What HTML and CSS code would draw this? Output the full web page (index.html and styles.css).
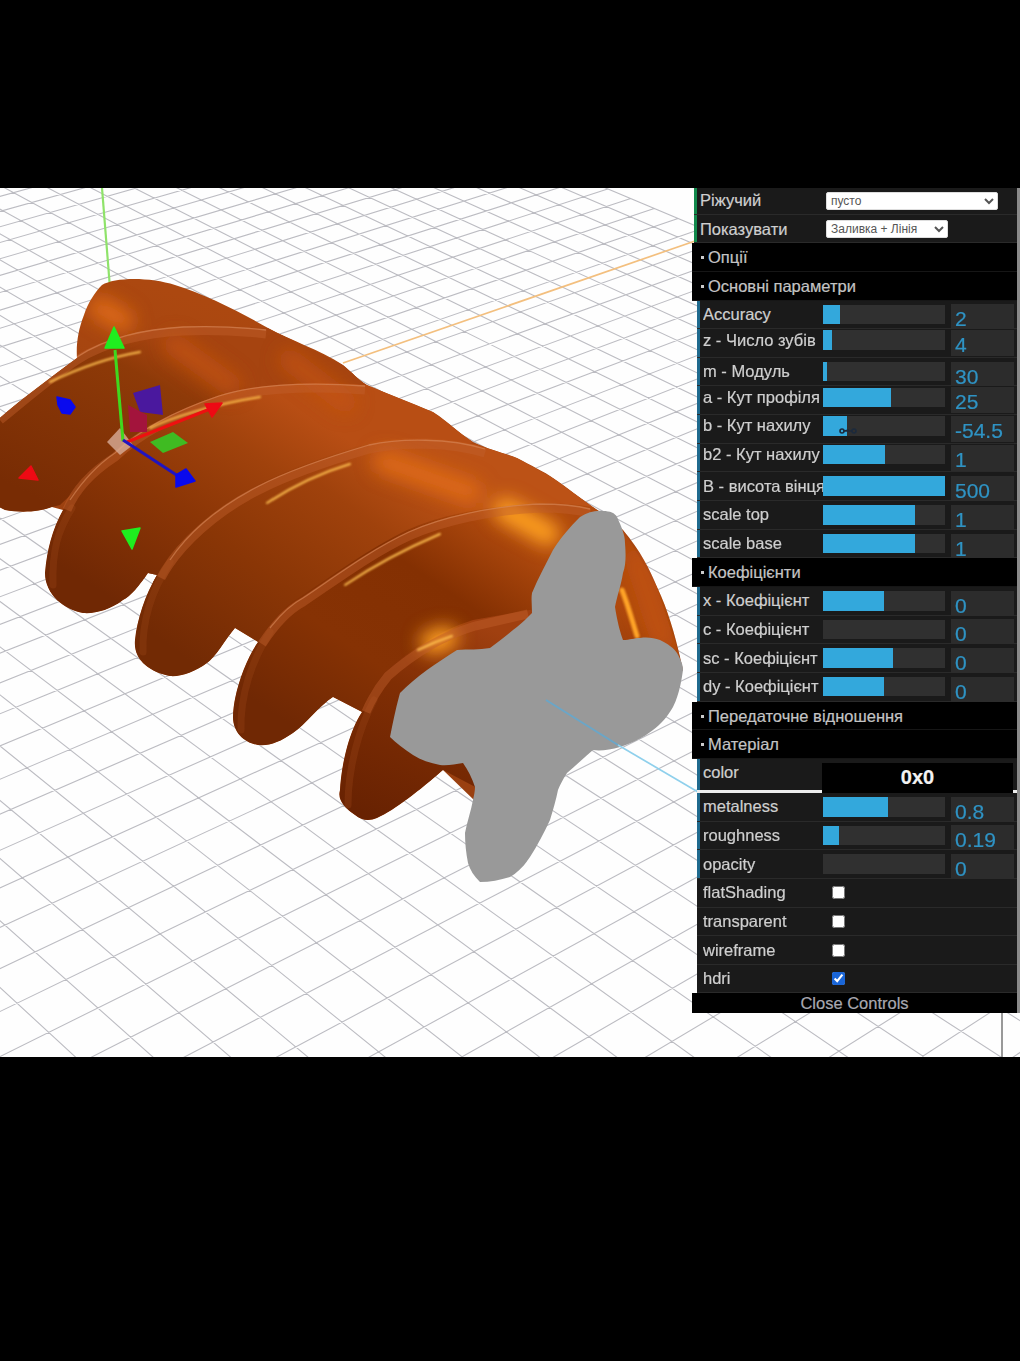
FILE: index.html
```html
<!DOCTYPE html>
<html lang="uk">
<head>
<meta charset="utf-8">
<title>Gear</title>
<link rel="stylesheet" href="styles.css">
</head>
<body>
<div class="band-top"></div>
<main class="stage">
  <svg class="scene" viewBox="0 188 1020 869" aria-hidden="true">
    <defs>
      <clipPath id="silhouette"><path d="M-5,422 C20,400 50,378 77,358 C76,345 78,330 84,315 C88,303 95,292 102,285 C115,277 150,277 175,285 C205,294 240,312 268,328 C290,340 320,350 343,365 C352,372 358,380 367,385 C390,395 410,402 433,412 C450,423 460,434 473,442 C490,450 505,453 517,458 C530,465 545,472 553,478 C568,488 580,498 593,507 C605,515 615,522 623,530 C640,550 650,570 657,587 C668,610 675,635 680,657 L683,670 L640,720 L560,770 L476,802 L443,770 C420,790 395,810 377,818 C370,821 362,821 355,815 C345,808 337,800 340,790 C342,760 350,730 362,712 L333,697 C320,705 305,725 293,733 C280,742 270,746 258,745 C245,743 233,733 233,717 C233,695 245,660 258,642 L235,628 C225,640 215,658 207,663 C195,672 180,677 170,676 C150,672 133,660 135,640 C137,620 145,595 157,575 L148,573 C140,585 130,597 123,600 C110,610 95,614 83,613 C65,610 45,595 45,573 C47,550 52,530 63,510 L52,507 C40,512 20,513 5,510 L-5,505 Z"/></clipPath>
      <linearGradient id="gBase" gradientUnits="userSpaceOnUse" x1="200" y1="300" x2="120" y2="560"><stop offset="0" stop-color="#ac4810"/><stop offset="1" stop-color="#9a4010"/></linearGradient>
      <linearGradient id="gT1" gradientUnits="userSpaceOnUse" x1="150" y1="335" x2="60" y2="510"><stop offset="0" stop-color="#a64410"/><stop offset=".2" stop-color="#8e3a08"/><stop offset="1" stop-color="#782c04"/></linearGradient>
      <linearGradient id="gT2" gradientUnits="userSpaceOnUse" x1="270" y1="390" x2="130" y2="610"><stop offset="0" stop-color="#b84e14"/><stop offset=".25" stop-color="#a0420c"/><stop offset=".55" stop-color="#8c3606"/><stop offset="1" stop-color="#702804"/></linearGradient>
      <linearGradient id="gT3" gradientUnits="userSpaceOnUse" x1="390" y1="445" x2="215" y2="680"><stop offset="0" stop-color="#bc5216"/><stop offset=".25" stop-color="#a0420c"/><stop offset=".6" stop-color="#8a3606"/><stop offset="1" stop-color="#722a04"/></linearGradient>
      <linearGradient id="gT4" gradientUnits="userSpaceOnUse" x1="480" y1="510" x2="320" y2="745"><stop offset="0" stop-color="#b04a0e"/><stop offset=".3" stop-color="#843002"/><stop offset=".65" stop-color="#863204"/><stop offset="1" stop-color="#702804"/></linearGradient>
      <linearGradient id="gT5" gradientUnits="userSpaceOnUse" x1="470" y1="620" x2="380" y2="820"><stop offset="0" stop-color="#a04010"/><stop offset=".4" stop-color="#802e04"/><stop offset="1" stop-color="#682202"/></linearGradient>
      <filter id="soft" x="-60%" y="-60%" width="220%" height="220%"><feGaussianBlur stdDeviation="9"/></filter>
      <filter id="softer" x="-40%" y="-40%" width="180%" height="180%"><feGaussianBlur stdDeviation=".9"/></filter>
    </defs>

    <rect class="floor" x="0" y="188" width="1020" height="869"/>
    <path id="grid" class="grid"/>
    <line class="axis-green" x1="102" y1="188" x2="110" y2="288"/>
    <line class="axis-orange" x1="343" y1="363" x2="695" y2="241"/>

    <g clip-path="url(#silhouette)">
      <rect class="gear-base" x="-5" y="270" width="700" height="560"/>
      <path class="t1" d="M-5,422 C20,400 50,378 77,358 C105,340 145,330 183,327 C210,326 240,327 268,328 L343,365 L367,385 L113,455 L60,505 L52,507 C40,512 20,513 5,510 L-5,505 Z"/>
      <path class="t2" d="M63,510 C72,490 90,470 113,455 C135,432 170,412 217,396 C250,386 300,380 367,385 L433,412 L473,442 L157,590 L148,573 C140,585 130,597 123,600 C110,610 95,614 83,613 C65,610 45,595 45,573 C47,550 52,530 63,510 Z"/>
      <path class="t3" d="M157,575 C175,540 215,505 257,485 C290,468 330,455 367,443 C400,436 450,436 487,448 L517,458 L553,478 L593,507 L340,600 L258,642 L235,628 C225,640 215,658 207,663 C195,672 180,677 170,676 C150,672 133,660 135,640 C137,620 145,595 157,575 Z"/>
      <path class="t4" d="M258,642 C272,620 285,605 300,597 C330,577 370,548 407,530 C440,515 490,505 540,503 C560,503 580,505 593,507 L623,530 L657,587 L680,657 L600,700 L450,640 L362,712 L333,697 C320,705 305,725 293,733 C280,742 270,746 258,745 C245,743 233,733 233,717 C233,695 245,660 258,642 Z"/>
      <path class="t5" d="M362,712 C368,695 375,685 385,672 C410,650 440,630 473,620 L530,610 L680,660 L500,800 L443,770 C420,790 395,810 377,818 C370,821 362,821 355,815 C345,808 337,800 340,790 C342,760 350,730 362,712 Z"/>

      <g class="sheen" filter="url(#soft)">
        <path class="sheen-a" d="M100,308 L122,320"/>
        <path class="sheen-b" d="M175,345 L230,385"/>
        <path class="sheen-b" d="M290,360 L345,402"/>
        <path class="sheen-a" d="M385,462 L470,492"/>
        <path class="sheen-c" d="M505,510 L548,534"/>
        <path class="sheen-c" d="M432,642 L446,638"/>
        <path class="sheen-b" d="M636,560 L662,640"/>
      </g>

      <g class="lobe-edges">
        <path d="M53,585 C52,550 58,530 72,508"/>
        <path d="M143,652 C142,620 152,590 170,562"/>
        <path d="M241,730 C240,695 252,660 270,632"/>
        <path d="M348,805 C348,770 358,730 374,700"/>
      </g>
      <g class="ridges">
        <path d="M0,420 C25,400 50,378 77,360 C105,342 145,333 183,331 C210,330 240,331 266,334"/>
        <path d="M67,510 C75,490 92,472 115,457 C137,436 172,416 219,400 C250,390 300,385 365,390"/>
        <path d="M161,578 C178,545 218,510 259,490 C292,473 332,460 369,449 C400,442 450,442 485,453"/>
        <path d="M262,644 C275,624 288,610 303,602 C333,582 372,553 409,536 C442,521 492,510 540,508 C560,508 578,510 590,513"/>
        <path d="M366,712 C372,698 378,688 388,676 C412,655 442,636 475,626 L528,614"/>
      </g>
      <g class="ridge-lines">
        <path d="M0,416 C25,396 50,374 77,357 C105,338 145,329 183,327 C210,326 240,327 266,330"/>
        <path d="M70,500 C82,482 97,465 115,453 C137,432 172,412 219,396 C250,386 300,381 365,386"/>
        <path d="M170,560 C190,530 222,505 259,486 C292,469 332,456 369,445 C400,438 450,438 485,449"/>
        <path d="M270,628 C280,615 290,605 303,598 C333,578 372,549 409,532 C442,517 492,506 540,504 C560,504 578,506 590,509"/>
      </g>
      <g class="glints" filter="url(#softer)">
        <path d="M50,382 C75,370 105,358 140,352"/>
        <path d="M150,428 C170,418 215,404 260,397"/>
        <path d="M267,503 C290,488 320,473 350,464"/>
        <path d="M345,585 C370,568 405,549 440,534"/>
        <path d="M418,650 C428,645 440,640 452,636"/>
        <path class="glint-wide" d="M622,590 C628,605 632,620 637,636"/>
      </g>
    </g>

    <path class="end-face" d="M580,517 C588,512 596,510 603,511 C610,511 615,513 617,517 C622,528 625,535 625,543 C626,555 626,565 623,573 C621,586 617,596 615,607 C617,620 620,632 623,640 C630,640 634,638 640,638 C648,637 654,638 660,640 C668,644 674,648 677,653 C681,660 683,665 683,670 C681,685 678,697 673,707 C668,716 661,724 653,730 C643,738 632,743 620,747 C610,750 600,751 593,750 C585,757 575,766 567,773 C563,779 560,785 558,790 C556,800 553,810 550,820 C544,833 537,846 530,857 C524,866 517,873 510,877 C500,880 490,882 480,882 C474,876 470,870 468,863 C466,853 465,843 465,833 C467,822 471,811 473,800 C474,795 475,791 475,787 C472,778 468,770 463,763 C455,764 448,766 440,765 C430,763 421,760 413,755 C404,749 396,743 390,737 C393,722 396,707 400,693 C408,685 417,677 427,670 C437,663 447,656 457,650 C468,649 479,650 490,648 C498,642 506,636 513,630 C520,625 526,619 532,613 C532,606 531,599 532,593 C538,578 546,564 553,550 C561,537 570,527 580,517 Z"/>
    <line class="axis-blue-in" x1="546" y1="700" x2="618" y2="745"/>
    <line class="axis-blue-out" x1="618" y1="745" x2="698" y2="792"/>

    <g class="gizmo">
      <polygon class="plane-blue" points="133,393 160,385 163,415 140,412"/>
      <polygon class="plane-red" points="128,405 147,415 147,432 130,432"/>
      <polygon class="plane-green" points="150,442 173,432 188,443 163,453"/>
      <polygon class="center" points="107,442 120,428 133,445 120,455"/>
      <line class="line-red" x1="127" y1="442" x2="210" y2="409"/>
      <line class="line-green" x1="123" y1="441" x2="115" y2="350"/>
      <line class="line-blue" x1="123" y1="440" x2="178" y2="476"/>
      <polygon class="cone-green" points="114,327 124,348 105,348"/>
      <polygon class="cone-blue" points="176,475 186,469 195,481 176,487"/>
      <polygon class="cone-red" points="205,404 222,403 212,417"/>
      <polygon class="cone-blue" points="57,397 70,400 75,407 70,414 62,413 58,405"/>
      <polygon class="cone-red" points="19,478 31,466 38,480"/>
      <polygon class="cone-green" points="122,531 140,528 132,549"/>
    </g>

    <rect class="scrollbar" x="1017" y="188" width="3" height="825"/>
    <line class="edge" x1="1002" y1="1013" x2="1002" y2="1057"/>
  </svg>

  <aside class="panel">
    <div class="row row-pick"><span class="label">Ріжучий</span><select class="pick pick-wide"><option>пусто</option></select></div>
    <div class="row row-pick"><span class="label">Показувати</span><select class="pick"><option>Заливка + Лінія</option></select></div>
    <div class="title">Опції</div>
    <div class="title">Основні параметри</div>

    <div class="row"><span class="label">Accuracy</span><div class="track"><div class="fill" style="width:14%"></div></div><div class="num">2</div></div>
    <div class="row raised"><span class="label">z - Число зубів</span><div class="track"><div class="fill" style="width:7%"></div></div><div class="num">4</div></div>
    <div class="row"><span class="label">m - Модуль</span><div class="track"><div class="fill" style="width:3%"></div></div><div class="num">30</div></div>
    <div class="row raised"><span class="label">a - Кут профіля</span><div class="track"><div class="fill" style="width:56%"></div></div><div class="num">25</div></div>
    <div class="row raised"><span class="label">b - Кут нахилу</span><div class="track"><div class="fill" style="width:20%"></div></div><div class="num">-54.5</div>
      <svg class="cursor" viewBox="0 0 18 10" aria-hidden="true"><circle cx="3" cy="5" r="2"/><circle cx="15" cy="5" r="2"/><path d="M5 5 L10 4 M5 5 L13 5"/></svg>
    </div>
    <div class="row raised"><span class="label">b2 - Кут нахилу</span><div class="track"><div class="fill" style="width:51%"></div></div><div class="num">1</div></div>
    <div class="row"><span class="label">B - висота вінця</span><div class="track"><div class="fill" style="width:100%"></div></div><div class="num">500</div></div>
    <div class="row"><span class="label">scale top</span><div class="track"><div class="fill" style="width:75%"></div></div><div class="num">1</div></div>
    <div class="row"><span class="label">scale base</span><div class="track"><div class="fill" style="width:75%"></div></div><div class="num">1</div></div>

    <div class="title">Коефіцієнти</div>
    <div class="row"><span class="label">x - Коефіцієнт</span><div class="track"><div class="fill" style="width:50%"></div></div><div class="num">0</div></div>
    <div class="row"><span class="label">c - Коефіцієнт</span><div class="track"></div><div class="num">0</div></div>
    <div class="row"><span class="label">sc - Коефіцієнт</span><div class="track"><div class="fill" style="width:57%"></div></div><div class="num">0</div></div>
    <div class="row"><span class="label">dy - Коефіцієнт</span><div class="track"><div class="fill" style="width:50%"></div></div><div class="num">0</div></div>

    <div class="title">Передаточне відношення</div>
    <div class="title">Матеріал</div>

    <div class="row row-color"><span class="label">color</span><div class="swatch">0x0</div></div>
    <div class="row"><span class="label">metalness</span><div class="track"><div class="fill" style="width:53%"></div></div><div class="num">0.8</div></div>
    <div class="row"><span class="label">roughness</span><div class="track"><div class="fill" style="width:13%"></div></div><div class="num">0.19</div></div>
    <div class="row"><span class="label">opacity</span><div class="track"></div><div class="num">0</div></div>
    <div class="row row-flag"><span class="label">flatShading</span><input class="flag" type="checkbox"></div>
    <div class="row row-flag"><span class="label">transparent</span><input class="flag" type="checkbox"></div>
    <div class="row row-flag"><span class="label">wireframe</span><input class="flag" type="checkbox"></div>
    <div class="row row-flag"><span class="label">hdri</span><input class="flag" type="checkbox" checked></div>
    <div class="close">Close Controls</div>
  </aside>
</main>
<script src="grid.js"></script>
</body>
</html>
```
FILE: styles.css
```css
* { box-sizing: border-box; }
html, body { margin: 0; height: 1361px; overflow: hidden; background: #000; }
body { display: flex; flex-direction: column; font-family: "Liberation Sans", Arial, sans-serif; }
.band-top { height: 188px; flex: none; background: #000; }
.stage { position: relative; height: 869px; flex: none; overflow: hidden; background: #fdfdfd; filter: blur(.6px); }
.scene { position: absolute; left: 0; top: 0; width: 1020px; height: 869px; display: block; }

.floor { fill: #fefefe; }
.grid { fill: none; stroke: #bcbcc2; stroke-width: 1.1; }
.axis-green { stroke: #8fe36a; stroke-width: 2.2; }
.axis-orange { stroke: #f3bf7e; stroke-width: 1.8; }
.axis-blue-in { stroke: #6aa6c8; stroke-width: 2; }
.axis-blue-out { stroke: #8fd0ec; stroke-width: 1.6; }

.gear-base { fill: url(#gBase); }
.t1 { fill: url(#gT1); }
.t2 { fill: url(#gT2); }
.t3 { fill: url(#gT3); }
.t4 { fill: url(#gT4); }
.t5 { fill: url(#gT5); }
.sheen path { fill: none; stroke-linecap: round; }
.sheen-a { stroke: #e06c14; stroke-width: 24; opacity: .9; }
.sheen-b { stroke: #c65412; stroke-width: 22; opacity: .7; }
.sheen-c { stroke: #ffa024; stroke-width: 24; }
.lobe-edges path { fill: none; stroke: #a04a1c; stroke-width: 7; opacity: .3; stroke-linecap: round; }
.ridges path { fill: none; stroke: #c0602c; stroke-width: 9; opacity: .45; }
.ridge-lines path { fill: none; stroke: #d88a5c; stroke-width: 1.3; opacity: .6; }
.glints path { fill: none; stroke: #ffc050; stroke-width: 2; stroke-linecap: round; }
.glints .glint-wide { stroke: #ffa428; stroke-width: 5; }
.end-face { fill: #999; }

.plane-blue { fill: #4a189e; }
.plane-red { fill: #a3143c; }
.plane-green { fill: #3fbb22; }
.center { fill: #d8ac98; opacity: .8; }
.line-red { stroke: #ee1010; stroke-width: 3; }
.line-green { stroke: #3fd81e; stroke-width: 3; }
.line-blue { stroke: #2014c0; stroke-width: 3; }
.cone-green { fill: #1fee1f; stroke: #1fee1f; stroke-linejoin: round; stroke-width: 1.5; }
.cone-blue { fill: #0a0aee; stroke: #0a0aee; stroke-linejoin: round; stroke-width: 1.5; }
.cone-red { fill: #ee0a14; stroke: #ee0a14; stroke-linejoin: round; stroke-width: 1.5; }
.scrollbar { fill: #8a8a8a; }
.edge { stroke: #777; stroke-width: 1.5; }

.panel { position: absolute; left: 692px; top: -2px; width: 325px; color: #cfcfcf; font-size: 16.5px; -webkit-text-stroke: .2px; }
.row { position: relative; display: flex; align-items: center; height: 28.65px; margin-left: 5px; padding-left: 6px; padding-right: 3px; background: #1a1a1a; border-bottom: 1px solid #2a2a2a; box-shadow: inset 3px 0 0 #1f6a8e; }
.row.raised { padding-bottom: 6px; }
.row-pick { box-shadow: inset 3px 0 0 #128a4c; margin-left: 2px; padding: 2px 3px 0 6px; }
.row-flag { box-shadow: inset 3px 0 0 #1a1a1a; }
.label { flex: none; width: 120px; white-space: nowrap; overflow: hidden; }
.track { flex: none; width: 122px; height: 19.5px; background: #303030; margin-right: 6px; }
.fill { height: 100%; background: #33a8dc; }
.num { flex: none; width: 63px; height: 26px; padding-left: 4px; margin-top: 6px; background: #2c2c2c; color: #2f93c4; font-size: 21px; line-height: 30px; overflow: hidden; }
.pick { margin-left: 6px; width: 172px; height: 18px; padding: 0; border: 1px solid #ddd; border-radius: 2px; background: #fff; color: #555; font: 12px "Liberation Sans", Arial, sans-serif; -webkit-text-stroke: 0; }
.pick:not(.pick-wide) { width: 122px; }
.title { height: 28.65px; padding-left: 16px; position: relative; background: #000; color: #c4c4c4; line-height: 28px; border-bottom: 1px solid #161616; }
.title::before { content: ""; position: absolute; left: 9px; top: 13px; width: 3px; height: 3px; background: #ccc; }
.row-color { height: 34.2px; border-bottom: 3px solid #eee; align-items: flex-start; padding-top: 4px; }
.swatch { position: absolute; left: 125px; right: 4px; top: 4px; height: 31px; background: #000; color: #f2f2f2; font-weight: 700; font-size: 20px; line-height: 29px; text-align: center; }
.flag { flex: none; width: 13px; height: 13px; margin: 0 0 0 9px; accent-color: #1a66d8; }
.close { height: 20px; background: #000; color: #a8a8b0; text-align: center; line-height: 20px; font-size: 16.5px; }
.cursor { position: absolute; left: 142px; top: 11px; width: 18px; height: 10px; }
.cursor circle { fill: none; stroke: #1c2a3c; stroke-width: 1.6; }
.cursor path { fill: none; stroke: #1c2a3c; stroke-width: 1.6; }
```
FILE: grid.js
```js
// Floor grid: a ruled plane seen in perspective, as GridHelper draws it in the 3D view.
var O = [83.3, 813.3], VA = [3900, -880], VB = [-2100, -950], a = 0.01148, b = 0.01324;

function project(u, v) {
  var w = 1 + a * u - b * v;
  return [
    ((O[0] + a * u * VA[0] - b * v * VB[0]) / w).toFixed(1),
    ((O[1] + a * u * VA[1] - b * v * VB[1]) / w).toFixed(1)
  ];
}

var UMIN = -45, UMAX = 30, VMIN = -70, VMAX = 25, d = "";
for (var u = UMIN; u <= UMAX; u++) {
  d += "M" + project(u, VMIN) + "L" + project(u, VMAX);
}
for (var v = VMIN; v <= VMAX; v++) {
  d += "M" + project(UMIN, v) + "L" + project(UMAX, v);
}
document.getElementById("grid").setAttribute("d", d);
```
